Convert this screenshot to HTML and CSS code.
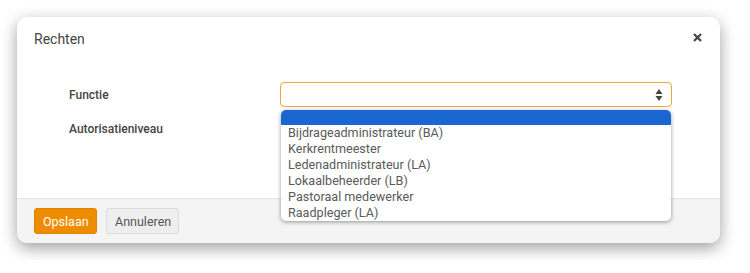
FILE: index.html
```html
<!DOCTYPE html>
<html lang="nl">
<head>
    <meta charset="UTF-8">
    <title>Rechten</title>
    <link rel="stylesheet" href="styles.css">
</head>
<body>
    <div class="modal">
        <div class="modal-header">
            <span class="modal-title">Rechten</span>
            <svg class="close" width="9" height="9" viewBox="0 0 9 9">
                <path d="M1 1 L8 8 M8 1 L1 8" stroke="#444" stroke-width="2.2"/>
            </svg>
        </div>
        <div class="modal-body">
            <div class="form-row">
                <label class="form-label">Functie</label>
                <div class="select-wrap">
                    <div class="select">
                        <svg class="arrows" width="8" height="14" viewBox="0 0 8 14">
                            <path d="M4 1 L7.5 6 L0.5 6 Z" fill="#444"/>
                            <path d="M4 13 L7.5 8 L0.5 8 Z" fill="#444"/>
                        </svg>
                    </div>
                    <ul class="dropdown">
                        <li class="selected">&nbsp;</li>
                        <li>Bijdrageadministrateur (BA)</li>
                        <li>Kerkrentmeester</li>
                        <li>Ledenadministrateur (LA)</li>
                        <li>Lokaalbeheerder (LB)</li>
                        <li>Pastoraal medewerker</li>
                        <li>Raadpleger (LA)</li>
                    </ul>
                </div>
            </div>
            <div class="form-row">
                <label class="form-label">Autorisatieniveau</label>
            </div>
        </div>
        <div class="modal-footer">
            <button class="btn btn-save">Opslaan</button>
            <button class="btn btn-cancel">Annuleren</button>
        </div>
    </div>
</body>
</html>
```

FILE: styles.css
```css
body {
    margin: 0;
    padding: 17px;
    background: #fff;
    font-family: Roboto, "Liberation Sans", sans-serif;
    color: #444;
}
.modal {
    width: 703px;
    height: 226px;
    background: #fff;
    border-radius: 10px;
    box-shadow: 0 5px 16px rgba(0, 0, 0, 0.38);
    display: flex;
    flex-direction: column;
}
.modal-header {
    height: 42px;
    padding: 0 18px 0 17px;
    display: flex;
    align-items: center;
    justify-content: space-between;
    box-sizing: border-box;
}
.modal-title {
    font-size: 14px;
    color: #444;
    padding-top: 1px;
}
.close {
    margin-top: -1px;
}
.modal-body {
    flex: 1;
    padding: 23px 0 0 52px;
}
.form-row {
    display: flex;
    align-items: center;
    height: 25px;
    margin-bottom: 9px;
}
.form-label {
    width: 211px;
    font-size: 12px;
    font-weight: 500;
    color: #444;
}
.select-wrap {
    position: relative;
}
.select {
    width: 392px;
    height: 25px;
    box-sizing: border-box;
    border: 1px solid #f0a73a;
    border-radius: 4px;
    background: #fff;
    display: flex;
    align-items: center;
    justify-content: flex-end;
    padding-right: 8px;
}
.dropdown {
    position: absolute;
    top: 28px;
    left: 1px;
    width: 390px;
    margin: 0;
    padding: 0;
    list-style: none;
    background: #fff;
    border-radius: 5px;
    box-shadow: 0 1px 4px rgba(0, 0, 0, 0.4);
    overflow: hidden;
    z-index: 2;
}
.dropdown li {
    height: 16px;
    line-height: 16px;
    padding-left: 7px;
    font-size: 12.6px;
    color: #5a5a5a;
}
.dropdown li.selected {
    background: #1a67d2;
    height: 15px;
}
.modal-footer {
    height: 45px;
    box-sizing: border-box;
    border-top: 1px solid #e5e5e5;
    background: #f4f4f4;
    border-radius: 0 0 10px 10px;
    padding: 9px 17px 0;
    display: flex;
    gap: 9px;
    align-items: flex-start;
}
.btn {
    height: 26px;
    padding: 0 8px;
    font-family: Roboto, "Liberation Sans", sans-serif;
    font-size: 12.5px;
    border-radius: 3px;
    cursor: pointer;
}
.btn-save {
    background: #ee8c00;
    border: 1px solid #e08400;
    color: #fff;
    width: 63px;
}
.btn-cancel {
    background: #eeeeee;
    border: 1px solid #dcdcdc;
    color: #555;
    width: 73px;
}
```
